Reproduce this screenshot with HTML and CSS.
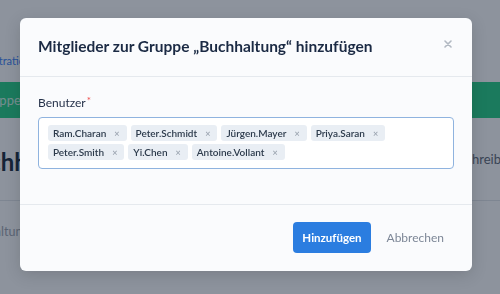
FILE: index.html
```html
<!DOCTYPE html>
<html lang="de">
<head>
  <meta charset="UTF-8" />
  <meta name="viewport" content="width=device-width, initial-scale=1" />
  <title>Gruppe Buchhaltung</title>
  <link rel="stylesheet" href="styles.css">
</head>
<body>
  <div class="page">
    <div class="crumbs"><a href="#">Administration</a> / Gruppen</div>
    <div class="banner">Gruppe wurde gespeichert</div>
    <div class="detail-head">
      <h2>Buchhaltung</h2>
      <span class="col-label">Beschreibung</span>
    </div>
    <div class="detail-row">Buchhaltung</div>
  </div>

  <div class="overlay">
    <div class="modal">
      <div class="modal-header">
        <h3>Mitglieder zur Gruppe „Buchhaltung“ hinzufügen</h3>
        <button class="close" aria-label="Schließen">
          <svg width="8" height="8" viewBox="0 0 8 8"><path d="M1 1L7 7M7 1L1 7" stroke="currentColor" stroke-width="1.6" stroke-linecap="round"/></svg>
        </button>
      </div>

      <div class="modal-body">
        <label class="field-label">Benutzer<span class="req">*</span></label>
        <div class="tag-input">
          <span class="tag">Ram.Charan<i>×</i></span>
          <span class="tag">Peter.Schmidt<i>×</i></span>
          <span class="tag">Jürgen.Mayer<i>×</i></span>
          <span class="tag">Priya.Saran<i>×</i></span>
          <span class="tag">Peter.Smith<i>×</i></span>
          <span class="tag">Yi.Chen<i>×</i></span>
          <span class="tag">Antoine.Vollant<i>×</i></span>
        </div>
      </div>

      <div class="modal-footer">
        <button class="btn-primary">Hinzufügen</button>
        <button class="btn-link">Abbrechen</button>
      </div>
    </div>
  </div>
</body>
</html>
```

FILE: styles.css
```css
body {
  margin: 0;
  font-family: Lato, "Liberation Sans", sans-serif;
  background: #fff;
  overflow: hidden;
}
.page {
  width: 580px;
  margin-left: -40px;
}
.crumbs {
  height: 82px;
  box-sizing: border-box;
  padding-top: 54px;
  font-size: 11px;
  line-height: 14px;
  color: #6b7280;
}
.crumbs a {
  color: #3b82f6;
  text-decoration: none;
}
.banner {
  height: 36px;
  line-height: 36px;
  padding-left: 18px;
  background: #26d085;
  color: rgba(255, 255, 255, 0.8);
  font-size: 13px;
}
.detail-head {
  display: grid;
  grid-template-columns: 485px 1fr;
  align-items: center;
  height: 82px;
  border-bottom: 1px solid #e3e6ea;
}
.detail-head h2 {
  margin: 0;
  font-size: 24px;
  font-weight: 700;
  color: #1a2b3c;
  padding-top: 4px;
}
.col-label {
  font-size: 13px;
  color: #5f6875;
}
.detail-row {
  padding-top: 23px;
  font-size: 12.5px;
  color: #a0a5af;
}

.overlay {
  position: fixed;
  inset: 0;
  background: rgba(17, 30, 50, 0.48);
  display: flex;
  align-items: flex-start;
  padding: 18px 0 0 20px;
}
.modal {
  width: 452px;
  background: #fafbfd;
  border-radius: 6px;
  box-shadow: 0 4px 16px rgba(0, 0, 0, 0.15);
}
.modal-header {
  display: flex;
  align-items: center;
  padding: 16px 18px 18px;
  border-bottom: 1px solid #e5e9ee;
}
.modal-header h3 {
  margin: 0;
  font-size: 15.5px;
  line-height: 24px;
  font-weight: 700;
  color: #1b2a44;
}
.close {
  margin-left: auto;
  margin-top: -4px;
  background: none;
  border: none;
  padding: 0 2px;
  color: #b1b8c2;
  display: flex;
  cursor: pointer;
}
.modal-body {
  padding: 17px 18px 35px;
}
.field-label {
  display: block;
  font-size: 12px;
  line-height: 18px;
  color: #26324a;
  margin-bottom: 5px;
}
.req {
  color: #ef4b4b;
  font-size: 10px;
  vertical-align: top;
  margin-left: 1px;
  line-height: 12px;
}
.tag-input {
  display: flex;
  flex-wrap: wrap;
  gap: 3px 4px;
  padding: 7px 9px 8px;
  background: #fff;
  border: 1px solid #8fb3df;
  border-radius: 4px;
}
.tag {
  display: inline-flex;
  align-items: center;
  height: 16px;
  padding: 0 7px 0 5px;
  background: #e9eef4;
  border-radius: 3px;
  font-size: 10px;
  font-weight: 600;
  color: #2c3a4b;
}
.tag i {
  font-style: normal;
  font-size: 9px;
  color: #9aa3af;
  margin-left: 8px;
}
.modal-footer {
  display: flex;
  justify-content: flex-end;
  align-items: center;
  gap: 3px;
  padding: 17px 15px 18px;
  border-top: 1px solid #e5e9ee;
}
.btn-primary {
  height: 31px;
  padding: 0 9px;
  background: #2b7de0;
  color: #fff;
  border: none;
  border-radius: 4px;
  font-family: inherit;
  font-size: 11.5px;
  font-weight: 700;
  cursor: pointer;
}
.btn-link {
  height: 31px;
  padding: 0 13px;
  background: none;
  border: none;
  color: #7d8797;
  font-family: inherit;
  font-size: 12px;
  cursor: pointer;
}
```
